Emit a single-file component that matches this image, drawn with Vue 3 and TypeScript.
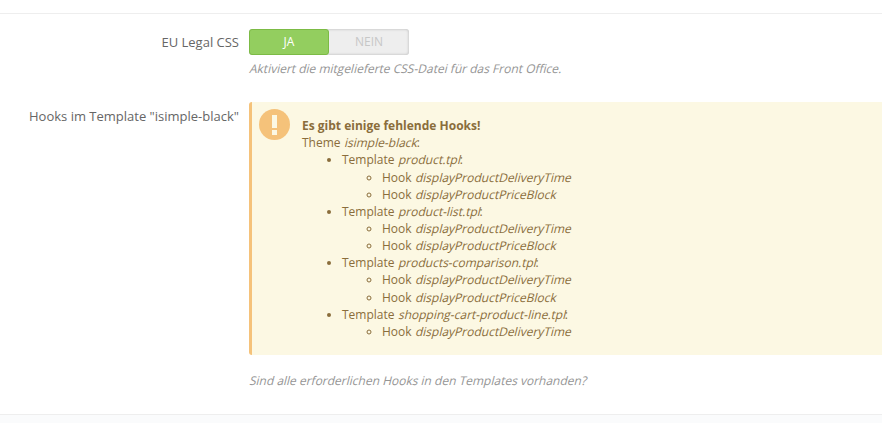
<script setup lang="ts">
interface TemplateEntry {
  file: string;
  hooks: string[];
}

const templates: TemplateEntry[] = [
  { file: "product.tpl", hooks: ["displayProductDeliveryTime", "displayProductPriceBlock"] },
  { file: "product-list.tpl", hooks: ["displayProductDeliveryTime", "displayProductPriceBlock"] },
  { file: "products-comparison.tpl", hooks: ["displayProductDeliveryTime", "displayProductPriceBlock"] },
  { file: "shopping-cart-product-line.tpl", hooks: ["displayProductDeliveryTime"] },
];
</script>

<template>
  <div class="Page">
    <div class="Form">
      <div class="Row RowToggle">
        <label class="Label LabelToggle">EU Legal CSS</label>
        <div class="Field">
          <div class="Switch">
            <span class="SwitchOn">JA</span>
            <span class="SwitchOff">NEIN</span>
          </div>
          <p class="Help"><i class="Slant">Aktiviert die mitgelieferte CSS-Datei für das Front Office.</i></p>
        </div>
      </div>

      <div class="Row RowHooks">
        <label class="Label LabelHooks">Hooks im Template "isimple-black"</label>
        <div class="Field">
          <div class="Alert">
            <span class="AlertIcon"><span class="Bang"></span><span class="Dot"></span></span>
            <b class="AlertTitle">Es gibt einige fehlende Hooks!</b>
            <div>Theme <i class="Slant">isimple-black</i>:</div>
            <ul class="Templates">
              <li v-for="template in templates" :key="template.file">
                Template <i class="Slant">{{ template.file }}</i>:
                <ul class="Hooks">
                  <li v-for="hook in template.hooks" :key="hook">Hook <i class="Slant">{{ hook }}</i></li>
                </ul>
              </li>
            </ul>
          </div>
          <p class="Help HelpHooks"><i class="Slant">Sind alle erforderlichen Hooks in den Templates vorhanden?</i></p>
        </div>
      </div>
    </div>
    <div class="Footer"></div>
  </div>
</template>

<style>
html,
body {
  margin: 0;
  background: #fff;
  overflow: hidden;
}
</style>

<style scoped>
.Page {
  width: 882px;
  height: 423px;
  font-family: "Open Sans", sans-serif;
  font-size: 12px;
  line-height: 17.14px;
  color: #666;
  display: flex;
  flex-direction: column;
  overflow: hidden;
}

.Form {
  margin-top: 13px;
  height: 401px;
  box-sizing: border-box;
  border-top: 1px solid #eee;
  flex: none;
}

.Row {
  display: flex;
  gap: 10px;
}

.RowToggle {
  padding-top: 15px;
}

.RowHooks {
  padding-top: 25px;
}

.Label {
  width: 239px;
  flex: none;
  text-align: right;
  font-size: 13px;
}

.LabelToggle {
  padding-top: 5px;
}

.LabelHooks {
  padding-top: 6px;
}

.Field {
  flex: 1;
  min-width: 0;
}

.Switch {
  display: flex;
  width: 160px;
  height: 26px;
  line-height: 26px;
  text-align: center;
  border-radius: 3px;
  background: #eee;
  box-shadow: inset 0 0 3px rgba(0, 0, 0, 0.25);
}

.SwitchOn,
.SwitchOff {
  width: 80px;
  box-sizing: border-box;
}

.SwitchOn {
  background: #93ce5f;
  color: #fff;
  border: 1px solid #7cbb45;
  border-radius: 3px;
  line-height: 24px;
}

.SwitchOff {
  color: #c7c7c7;
}

.Help {
  margin: 5px 0 0;
  color: #959595;
}

.HelpHooks {
  margin-top: 17px;
}

/* the reference slants the upright face, the real italic face is narrower */
.Slant {
  display: inline-block;
  font-style: normal;
  transform: skewX(-14deg);
  transform-origin: 0 75%;
}

.Alert {
  position: relative;
  box-sizing: border-box;
  height: 253px;
  padding: 15px 15px 15px 50px;
  background: #fcf8e3;
  border-left: 3px solid #f5c27a;
  border-radius: 3px 0 0 3px;
  color: #8a6d3b;
}

.AlertTitle {
  display: block;
}

.AlertIcon {
  position: absolute;
  left: 7px;
  top: 7px;
  width: 31px;
  height: 31px;
  border-radius: 50%;
  background: #f5c27a;
}

.Bang {
  position: absolute;
  left: 13px;
  top: 6px;
  width: 5px;
  height: 13px;
  background: #fcf8e3;
}

.Dot {
  position: absolute;
  left: 13px;
  top: 21px;
  width: 5px;
  height: 5px;
  background: #fcf8e3;
}

.Templates,
.Hooks {
  margin: 0;
  padding-left: 40px;
}

.Templates {
  list-style: disc;
}

.Hooks {
  list-style: circle;
}

.Footer {
  flex: 1;
  background: #fafbfc;
  border-top: 1px solid #eee;
}
</style>
